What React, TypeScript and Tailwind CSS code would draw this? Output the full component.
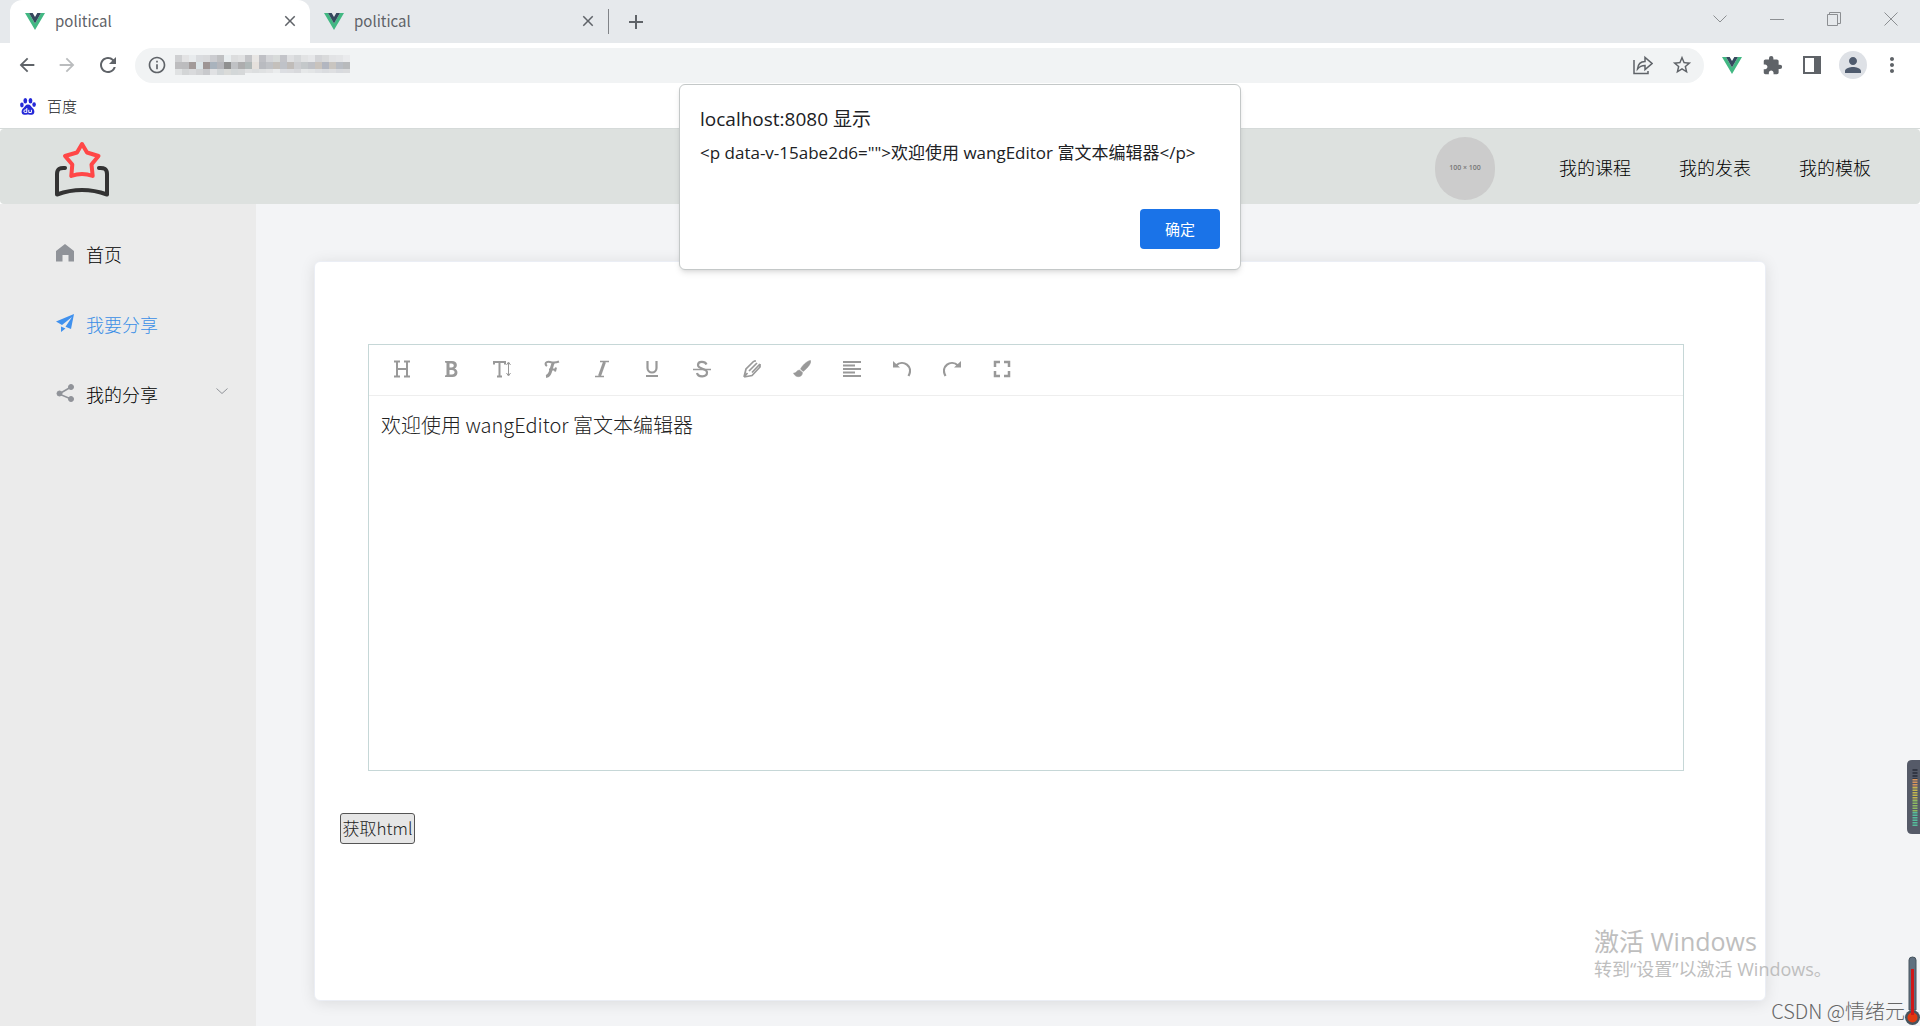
import type { ReactNode } from 'react'
import {
    MdAdd,
    MdArrowBack,
    MdArrowForward,
    MdClose,
    MdExtension,
    MdInfoOutline,
    MdMoreVert,
    MdPerson,
    MdRefresh,
    MdStarBorder,
} from 'react-icons/md'

const toolbar: { label: string; icon: ReactNode }[] = [
    {
        label: '标题',
        icon: <path d="M1 1.5h6M11 1.5h6M1 16.5h6M11 16.5h6M4 1.5v15M14 1.5v15M4 9h10" strokeWidth="2" />,
    },
    {
        label: '加粗',
        icon: (
            <path
                d="M2 1h7c6 0 6 6.500 2.500 7.500C16 10 15.500 17 9.500 17H2v-1.500l1.500-.5V3L2 2.500zM6.500 3.500v4h2c3 0 3-4 0-4zM6.500 10v4.500H9c3.500 0 3.500-4.500 0-4.500z"
                fill="currentColor"
                fillRule="evenodd"
                stroke="none"
            />
        ),
    },
    {
        label: '字号',
        icon: (
            <>
                <path d="M1 4.5V2h11v2.500M6.5 2v14.500M4 16.500h5" strokeWidth="2" />
                <path d="M15.5 3v12M13.500 5l2-3 2 3M13.500 13l2 3 2-3" strokeWidth="1" />
            </>
        ),
    },
    {
        label: '字体',
        icon: (
            <>
                <path d="M4 6C1 4 3 1 7 2c3 .8 6 .8 9-.5M6 9.500h7M13 7.500l-1 4" strokeWidth="2" />
                <path d="M10.500 2.500C8 6 8.500 16 3 16.500" strokeWidth="3" />
            </>
        ),
    },
    {
        label: '斜体',
        icon: (
            <>
                <path d="M7 1.500h9M2 16.500h9" strokeWidth="1.5" />
                <path d="M11.500 2l-5 14" strokeWidth="3" />
            </>
        ),
    },
    {
        label: '下划线',
        icon: (
            <>
                <path d="M4.500 1v7a4.500 4.500 0 0 0 9 0V1" strokeWidth="2.200" />
                <path d="M3 16h12" strokeWidth="2" />
            </>
        ),
    },
    {
        label: '删除线',
        icon: (
            <>
                <path d="M13.500 4.500C12 1 5 1 5 5c0 4.500 9 3 9 7.500 0 5-9 5-10 .5" strokeWidth="2.200" />
                <path d="M0 9.500h18" strokeWidth="1.5" />
            </>
        ),
    },
    {
        label: '文字颜色',
        icon: (
            <path
                d="M1 17L3 9 11 1M1 17l8-1.500 8-8.500V4M1 17l3.500-4M11 1h2M6 11l8-8M9 12.500L17 4"
                strokeWidth="1.7"
            />
        ),
    },
    {
        label: '背景色',
        icon: (
            <path
                d="M17.500.5C16 0 10 4 7.500 9l2.500 2.500C15 8 19 2 17.500.5zM6.500 10c-3 0-3 3.500-6 3 1.500 5 9 5 9-.5z"
                fill="currentColor"
                strokeWidth="0.5"
            />
        ),
    },
    {
        label: '对齐',
        icon: <path d="M0 2h18M0 5.500h12M0 9h18M0 12.500h12M0 16h18" strokeWidth="2" />,
    },
    {
        label: '撤销',
        icon: (
            <>
                <path d="M3 5.500C10-1 21 6 15.500 16" strokeWidth="2.200" />
                <path d="M0 1v6.500h7z" fill="currentColor" stroke="none" />
            </>
        ),
    },
    {
        label: '重做',
        icon: (
            <>
                <path d="M15 5.500C8-1-3 6 2.500 16" strokeWidth="2.200" />
                <path d="M18 1v6.500h-7z" fill="currentColor" stroke="none" />
            </>
        ),
    },
    {
        label: '全屏',
        icon: <path d="M2 7V2h5M11 2h5v5M16 11v5h-5M7 16H2v-5" strokeWidth="2.5" />,
    },
]

const navLinks = ['我的课程', '我的发表', '我的模板']

const mosaic = [
    ['#cfd0d2', '#e3e3e4', '#e8ebed', '#dadcdf', '#d9dadc', '#cbccd0', '#bfc0c2', '#e9eef0', '#dcddde', '#e0e1e2', '#c4c5c8', '#e8e6e4', '#bfc0c5', '#d4d5d8', '#d8dbda', '#c3c4c9', '#dfe0e2', '#d6d8da', '#e2e3e4', '#e6e7e9', '#d3d4d7', '#d9dadb', '#e2e3e5', '#e4e5e7', '#eaebed'],
    ['#bdbdbf', '#bcbcbe', '#a29a99', '#dce5e8', '#9e9594', '#a9b3bd', '#b5b6bb', '#8f9090', '#bfc1c4', '#adadae', '#b0b8b8', '#e5e0dc', '#b9bbc0', '#c0c2c6', '#c4c0bb', '#bfc2c8', '#c0bcb9', '#cccdd0', '#c4c8ca', '#bfc1c6', '#c9c3bd', '#b2b6c0', '#c9c5c0', '#b9bdc4', '#b8babc'],
    ['#e0e2e3', '#d3d5d6', '#d9dadc', '#d2d3d5', '#c8c9cc', '#e0e1e3', '#d2d6d8', '#dadbd9', '#d3d7d8', '#d6d8d9', '#e0e1e2', '#dcdedf', '#dfe1e2', '#e3e4e5', '#eaeced', '#dcdee2', '#dcdde0', '#d8d9dc', '#e6e8e9', '#e3e5e6', '#dee0e3', '#dadcdf', '#dedfe1', '#d8dade', '#dadbdd'],
]

function VueLogo() {
    return (
        <svg viewBox="0 0 20 17" className="h-[17px] w-5 shrink-0">
            <path d="M0 0h4l6 10.400L16 0h4L10 17z" fill="#42b883" />
            <path d="M4 0h3.700L10 4l2.300-4H16l-6 10.400z" fill="#35495e" />
        </svg>
    )
}

function BrowserTab({ active }: { active?: boolean }) {
    return (
        <div
            className={
                active
                    ? 'flex h-[43px] w-[300px] items-center rounded-t-xl bg-white pr-[11px] pb-px pl-[15px]'
                    : 'flex h-[43px] w-[298px] items-center pr-[11px] pb-px pl-[14px]'
            }
        >
            <VueLogo />
            <span className="ml-[10px] flex-1 text-[15px] leading-5 font-normal text-[#5f6368]">political</span>
            <button aria-label="关闭标签页" className="text-[#5f6368]">
                <MdClose className="size-[18px]" />
            </button>
        </div>
    )
}

function WindowButton({ label, d }: { label: string; d: string }) {
    return (
        <button aria-label={label} className="flex w-[57px] justify-center">
            <svg viewBox="0 0 14 14" className="size-[14px]" fill="none" stroke="currentColor">
                <path d={d} />
            </svg>
        </button>
    )
}

function Browser() {
    return (
        <div className="border-b border-[#d5dad9] bg-white">
            <div className="flex h-[43px] items-center bg-[#e6e9ec] pl-[10px]">
                <BrowserTab active />
                <BrowserTab />
                <span className="h-[25px] w-px bg-[#808387]" />
                <button aria-label="新标签页" className="ml-[15px] text-[#5f6368]">
                    <MdAdd className="size-6" />
                </button>
                <div className="ml-auto flex items-center pr-px pb-1.5 text-[#8c8f92]">
                    <WindowButton label="搜索标签页" d="M.5 3.500L7 10l6.500-6.500" />
                    <WindowButton label="最小化" d="M0 7.500h14" />
                    <WindowButton label="还原" d="M.5 2.500h10v11H.5zM2.500 2.500v-2h11v11h-3" />
                    <WindowButton label="关闭" d="M.5.5l13 13M13.500.5l-13 13" />
                </div>
            </div>

            <div className="flex h-[45px] items-center px-4 pb-px text-[#5f6368]">
                <button aria-label="后退" className="mr-[18px]">
                    <MdArrowBack className="size-[22px]" />
                </button>
                <button aria-label="前进" className="mr-[18px] text-[#babcbe]">
                    <MdArrowForward className="size-[22px]" />
                </button>
                <button aria-label="重新加载" className="mr-[15px]">
                    <MdRefresh className="size-6" />
                </button>
                <div className="flex h-[35px] flex-1 items-center rounded-full bg-[#f1f3f4] pr-[11px] pl-3">
                    <MdInfoOutline className="size-5" />
                    <svg viewBox="0 0 175 20" className="ml-2 h-5 w-[175px]" shapeRendering="crispEdges">
                        {mosaic.map((row, y) =>
                            row.map((fill, x) => (
                                <rect
                                    key={`${x}-${y}`}
                                    x={x * 7}
                                    y={y * 7}
                                    width="7"
                                    height={y === 2 && x > 9 ? 4 : 7}
                                    fill={fill}
                                />
                            )),
                        )}
                    </svg>
                    <button aria-label="分享此页" className="ml-auto">
                        <svg viewBox="0 0 20 20" className="size-5" fill="none" stroke="currentColor" strokeWidth="1.5">
                            <path d="M1 5v13.500h14V16" />
                            <path d="M4.500 14c.5-5 3.500-7.500 7.500-7.500V2.500l7 6-7 6v-4c-3.500 0-5.500 1-7.500 3.500z" />
                        </svg>
                    </button>
                    <button aria-label="添加书签" className="ml-[18px]">
                        <MdStarBorder className="size-[22px]" />
                    </button>
                </div>
                <div className="ml-[18px] flex items-center">
                    <VueLogo />
                    <button aria-label="扩展程序" className="ml-5">
                        <MdExtension className="size-[21px]" />
                    </button>
                    <button aria-label="侧边栏" className="ml-5">
                        <svg viewBox="0 0 18 18" className="size-[18px]">
                            <path d="M0 0h18v18H0zM2 2v14h9V2z" fill="currentColor" fillRule="evenodd" />
                        </svg>
                    </button>
                    <button
                        aria-label="个人资料"
                        className="ml-[18px] flex size-7 items-center justify-center rounded-full bg-[#dee1e6] text-[#4f5b6e]"
                    >
                        <MdPerson className="size-6" />
                    </button>
                    <button aria-label="更多" className="ml-[13px]">
                        <MdMoreVert className="size-6" />
                    </button>
                </div>
            </div>

            <div className="flex h-10 items-center pb-1 pl-5">
                <a href="#baidu" className="flex items-center gap-[11px] text-[15px] leading-5 text-[#202124]">
                    <svg viewBox="0 0 16 17" className="h-[17px] w-4" fill="#2529d8">
                        <ellipse cx="5.300" cy="2.800" rx="1.900" ry="2.700" />
                        <ellipse cx="10.500" cy="2.800" rx="1.900" ry="2.700" />
                        <ellipse cx="1.900" cy="7" rx="1.800" ry="2.400" />
                        <ellipse cx="14.100" cy="6.600" rx="1.800" ry="2.400" />
                        <path d="M8 6.500c2.500 0 3 2.200 4.800 3.800 2.200 2 2.300 6.200-1 6.500-1.500.1-2.300-.4-3.800-.4s-2.300.5-3.800.4c-3.300-.3-3.200-4.500-1-6.500C5 8.700 5.500 6.500 8 6.500z" />
                        <path
                            d="M6.800 10v4.500H5.200a1.300 1.300 0 0 1 0-2.600h1.600M8.800 11.800v2.700h2.600v-2.700"
                            fill="none"
                            stroke="#fff"
                        />
                    </svg>
                    百度
                </a>
            </div>
        </div>
    )
}

function SiteHeader() {
    return (
        <header className="flex h-[75px] items-center justify-between rounded bg-[#dde1df] pt-1 pr-[25px] pl-[55px]">
            <svg viewBox="0 0 54 56" className="h-14 w-[54px]" fill="none" strokeLinejoin="round" strokeLinecap="round">
                <path
                    d="M27 3l5 8.500 11.500 3.500-7 8.500 1.200 11.500q-10.700-4-21.400 0l1-11.500-7.300-8.500L22 11.500z"
                    stroke="#ff4747"
                    strokeWidth="4"
                />
                <path d="M10 27c-5-.5-8 1-8 6v20.500q25-9 50 0V33c0-5-3-6.500-8-6" stroke="#333" strokeWidth="4" />
            </svg>
            <nav className="flex items-center">
                <div className="mr-10 flex h-[63px] w-[60px] items-center justify-center rounded-full bg-[#ccc] font-['Open_Sans',sans-serif] text-[7px] font-semibold text-[#777]">
                    100 × 100
                </div>
                {navLinks.map((link) => (
                    <a key={link} href="#nav" className="px-6 pb-1 text-[18px] leading-6 text-black">
                        {link}
                    </a>
                ))}
            </nav>
        </header>
    )
}

function Sidebar() {
    return (
        <aside className="w-64 shrink-0 bg-[#ebebeb] pt-4 text-[18px] text-black">
            <a href="#home" className="flex h-[70px] items-center gap-3 pb-0.5 pl-14">
                <svg viewBox="0 0 18 18" className="mb-0.5 size-[18px]" fill="#909399">
                    <path d="M9 0l9 7v10.500h-5.500V11h-6v6.500H0V7z" />
                </svg>
                首页
            </a>
            <a href="#share" className="flex h-[70px] items-center gap-3 pb-0.5 pl-14 text-[#3a8ee6]">
                <svg viewBox="0 0 18 18" className="mb-0.5 size-[18px]" fill="#4091ee">
                    <path d="M18 0l-3 15-5.500-2.200L16 3 6 11 0 7.500zM5 12.500l4.500 2L5 18z" />
                </svg>
                我要分享
            </a>
            <a href="#mine" className="flex h-[70px] items-center gap-3 pr-7 pb-0.5 pl-14">
                <svg viewBox="0 0 18 18" className="mb-0.5 size-[18px]" fill="#909399" stroke="#909399">
                    <path d="M15 3L3 10l12 5" fill="none" strokeWidth="1.5" />
                    <circle cx="15" cy="3" r="2.500" />
                    <circle cx="3.500" cy="9.500" r="2.500" />
                    <circle cx="15" cy="15" r="2.500" />
                </svg>
                我的分享
                <svg viewBox="0 0 12 12" className="mb-1.5 ml-auto size-3" fill="none" stroke="#909399">
                    <path d="M.5 3.500L6 8.500l5.500-5" />
                </svg>
            </a>
        </aside>
    )
}

function Editor() {
    return (
        <div className="mr-[81px] ml-[53px] flex h-[427px] flex-col border border-[#c6d7d7]">
            <div className="flex h-[51px] items-center border-b border-[#eee] pb-0.5 pl-2 text-[#999]">
                {toolbar.map(({ label, icon }) => (
                    <button key={label} aria-label={label} className="flex h-full w-[50px] items-center justify-center">
                        <svg viewBox="0 0 18 18" className="size-[18px]" fill="none" stroke="currentColor">
                            {icon}
                        </svg>
                    </button>
                ))}
            </div>
            <textarea
                aria-label="编辑器内容"
                className="flex-1 resize-none px-3 pt-[13px] text-[20px] leading-8 text-[#222] outline-none"
                defaultValue="欢迎使用 wangEditor 富文本编辑器"
            />
        </div>
    )
}

function AlertDialog() {
    return (
        <div
            role="dialog"
            aria-labelledby="alert-title"
            className="absolute top-[84px] left-1/2 flex w-[562px] -translate-x-1/2 flex-col rounded-md border border-[#c4c8c8] bg-white px-5 pt-5 pb-5 font-['Open_Sans','Noto_Sans_CJK_SC',sans-serif] font-normal text-[#202124] shadow-md"
        >
            <h1 id="alert-title" className="text-[19px] leading-7">
                localhost:8080 显示
            </h1>
            <p className="mt-2 text-[17px] leading-6 whitespace-nowrap">
                {'<p data-v-15abe2d6="">欢迎使用 wangEditor 富文本编辑器</p>'}
            </p>
            <button className="mt-11 h-10 w-20 self-end rounded bg-[#1a73e8] text-[15px] text-white">确定</button>
        </div>
    )
}

function DesktopOverlays() {
    return (
        <>
            <div className="pointer-events-none absolute right-[94px] bottom-[49px] w-[232px] font-['Open_Sans','Noto_Sans_CJK_SC',sans-serif] font-normal whitespace-nowrap text-[#bebebe]">
                <div className="text-[25px] leading-8">激活 Windows</div>
                <div className="text-[18px] leading-6">转到“设置”以激活 Windows。</div>
            </div>
            <div className="absolute right-[15px] bottom-[5px] text-[20px] leading-7 text-[#666]">CSDN @情绪元</div>
            <svg viewBox="0 0 13 74" className="absolute right-0 bottom-[196px] h-[74px] w-[13px]">
                <path d="M13 0H5Q0 0 0 5v64q0 5 5 5h8z" fill="#555a68" />
                <path d="M8 9v10" stroke="#333744" strokeWidth="5" strokeDasharray="2 1" />
                <g strokeWidth="5" strokeDasharray="1.5 1" opacity="0.85">
                    <path d="M8 19v8" stroke="#f0a05a" />
                    <path d="M8 27v13" stroke="#d8c84a" />
                    <path d="M8 40v12" stroke="#98cc62" />
                    <path d="M8 52v14" stroke="#55cfa5" />
                </g>
            </svg>
            <svg viewBox="0 0 16 70" className="absolute right-0 bottom-1 h-[70px] w-4">
                <path d="M5 4q0-3 3.500-3T12 4v50H5z" fill="#607080" stroke="#46545e" />
                <circle cx="8.500" cy="61.500" r="7.500" fill="#46545e" />
                <circle cx="8.500" cy="61.500" r="5" fill="#e03a10" />
                <path d="M8.500 13v46" stroke="#d01818" strokeWidth="3" />
            </svg>
        </>
    )
}

export default function App() {
    return (
        <div className="relative flex min-h-screen flex-col bg-white pb-1 font-['Noto_Sans_CJK_SC',sans-serif] font-light">
            <Browser />
            <SiteHeader />
            <div className="flex flex-1">
                <Sidebar />
                <main className="flex flex-1 flex-col bg-[#f3f4f6] pt-[57px] pr-[154px] pb-[25px] pl-[58px]">
                    <section className="flex-1 rounded-md border border-[#ebeef5] bg-white pt-[82px] shadow-[0_2px_15px_rgba(0,0,0,0.1)]">
                        <Editor />
                        <button className="mt-[42px] ml-[25px] h-[31px] w-[75px] rounded-[3px] border border-[#555] bg-[#e6e6e6] pb-0.5 text-[17px] leading-none whitespace-nowrap text-[#222]">
                            获取html
                        </button>
                    </section>
                </main>
            </div>
            <AlertDialog />
            <DesktopOverlays />
        </div>
    )
}
